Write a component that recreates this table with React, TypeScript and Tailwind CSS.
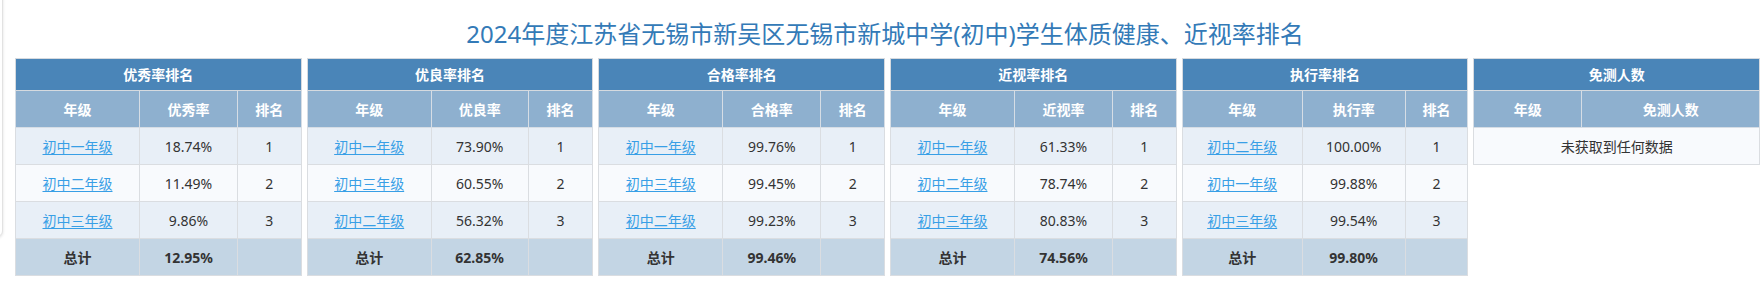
import React from "react";

type Row = { grade: string; value: string; rank: string };
type TableData = { title: string; col: string; rows: Row[]; total: string; w1: number; w2: number };

const tables: TableData[] = [
  {
    title: "优秀率排名",
    col: "优秀率",
    rows: [
      { grade: "初中一年级", value: "18.74%", rank: "1" },
      { grade: "初中二年级", value: "11.49%", rank: "2" },
      { grade: "初中三年级", value: "9.86%", rank: "3" },
    ],
    total: "12.95%",
    w1: 124,
    w2: 98,
  },
  {
    title: "优良率排名",
    col: "优良率",
    rows: [
      { grade: "初中一年级", value: "73.90%", rank: "1" },
      { grade: "初中三年级", value: "60.55%", rank: "2" },
      { grade: "初中二年级", value: "56.32%", rank: "3" },
    ],
    total: "62.85%",
    w1: 124,
    w2: 97,
  },
  {
    title: "合格率排名",
    col: "合格率",
    rows: [
      { grade: "初中一年级", value: "99.76%", rank: "1" },
      { grade: "初中三年级", value: "99.45%", rank: "2" },
      { grade: "初中二年级", value: "99.23%", rank: "3" },
    ],
    total: "99.46%",
    w1: 124,
    w2: 98,
  },
  {
    title: "近视率排名",
    col: "近视率",
    rows: [
      { grade: "初中一年级", value: "61.33%", rank: "1" },
      { grade: "初中二年级", value: "78.74%", rank: "2" },
      { grade: "初中三年级", value: "80.83%", rank: "3" },
    ],
    total: "74.56%",
    w1: 124,
    w2: 98,
  },
  {
    title: "执行率排名",
    col: "执行率",
    rows: [
      { grade: "初中二年级", value: "100.00%", rank: "1" },
      { grade: "初中一年级", value: "99.88%", rank: "2" },
      { grade: "初中三年级", value: "99.54%", rank: "3" },
    ],
    total: "99.80%",
    w1: 120,
    w2: 103,
  },
];

const font = { fontFamily: '"Noto Sans", "Noto Sans CJK SC", sans-serif' };

function RankTable({ t }: { t: TableData }) {
  return (
    <table className="w-full table-fixed border-collapse text-[14px] text-[#333]">
      <colgroup>
        <col style={{ width: t.w1 }} />
        <col style={{ width: t.w2 }} />
        <col />
      </colgroup>
      <thead>
        <tr className="h-[32px]">
          <th colSpan={3} className="border border-[#d6dadf] bg-[#4a85b8] text-white font-bold p-0 align-middle">
            {t.title}
          </th>
        </tr>
        <tr className="h-[37px] bg-[#8eb0cf] text-white">
          <th className="border border-[#d6dde5] font-bold p-0">年级</th>
          <th className="border border-[#d6dde5] font-bold p-0">{t.col}</th>
          <th className="border border-[#d6dde5] font-bold p-0">排名</th>
        </tr>
      </thead>
      <tbody>
        {t.rows.map((r, i) => (
          <tr key={i} className={`h-[37px] ${i % 2 === 0 ? "bg-[#e8eff7]" : "bg-[#f8fafd]"}`}>
            <td className="border border-[#dadde1] text-center p-0">
              <a className="text-[#389fe6] underline underline-offset-2 cursor-pointer">{r.grade}</a>
            </td>
            <td className="border border-[#dadde1] text-center p-0">{r.value}</td>
            <td className="border border-[#dadde1] text-center p-0">{r.rank}</td>
          </tr>
        ))}
        <tr className="h-[37px] bg-[#c3d5e4] font-bold">
          <td className="border border-[#dadde1] text-center p-0">总计</td>
          <td className="border border-[#dadde1] text-center p-0">{t.total}</td>
          <td className="border border-[#dadde1] text-center p-0"></td>
        </tr>
      </tbody>
    </table>
  );
}

function ExemptTable() {
  return (
    <table className="w-full table-fixed border-collapse text-[14px] text-[#333]">
      <colgroup>
        <col style={{ width: 108 }} />
        <col />
      </colgroup>
      <thead>
        <tr className="h-[32px]">
          <th colSpan={2} className="border border-[#d6dadf] bg-[#4a85b8] text-white font-bold p-0">
            免测人数
          </th>
        </tr>
        <tr className="h-[37px] bg-[#8eb0cf] text-white">
          <th className="border border-[#d6dde5] font-bold p-0">年级</th>
          <th className="border border-[#d6dde5] font-bold p-0">免测人数</th>
        </tr>
      </thead>
      <tbody>
        <tr className="h-[37px] bg-[#f8fafd]">
          <td colSpan={2} className="border border-[#dadde1] text-center p-0">
            未获取到任何数据
          </td>
        </tr>
      </tbody>
    </table>
  );
}

export default function App() {
  return (
    <div className="relative w-[1760px] h-[304px] bg-white overflow-hidden pl-[10px]" style={font}>
      <div className="absolute left-[-10px] top-[-10px] w-[13px] h-[247px] rounded-md border border-[#e2e2e2] bg-white shadow-[0_1px_3px_rgba(0,0,0,0.12)]" />
      <h2 className="pt-[21px] mb-[11px] text-center text-[24px] leading-[26px] font-normal text-[#337ab7]">
        2024年度江苏省无锡市新吴区无锡市新城中学(初中)学生体质健康、近视率排名
      </h2>
      <div className="grid grid-cols-6">
        {tables.map((t) => (
          <div key={t.title} className="pl-[5px]">
            <RankTable t={t} />
          </div>
        ))}
        <div className="pl-[5px]">
          <ExemptTable />
        </div>
      </div>
    </div>
  );
}
